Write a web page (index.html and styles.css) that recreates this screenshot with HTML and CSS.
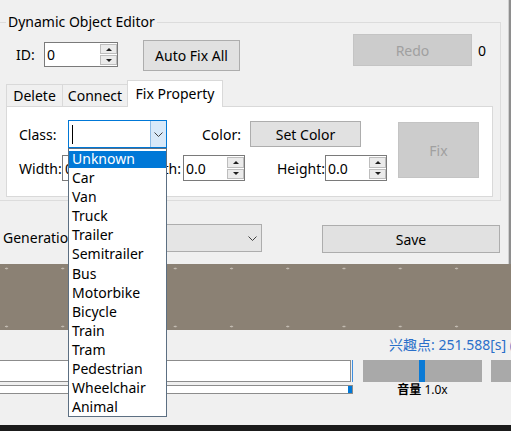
FILE: index.html
```html
<!DOCTYPE html>
<html lang="en">
<head>
<meta charset="utf-8">
<title>Dynamic Object Editor</title>
<link rel="stylesheet" href="styles.css">
</head>
<body>
<div class="top">
  <div class="dialog">
    <fieldset class="group">
      <legend class="group-title">Dynamic Object Editor</legend>
      <div class="row-id">
        <div class="id-field">
          <span class="lbl lbl-id">ID:</span>
          <div class="spin spin-id">
            <span class="spin-val">0</span>
            <span class="spin-btns"><span class="spin-b spin-up"></span><span class="spin-b spin-down"></span></span>
          </div>
        </div>
        <button class="btn btn-autofix">Auto Fix All</button>
        <button class="btn btn-redo" disabled>Redo</button>
        <span class="redo-count">0</span>
      </div>
      <div class="tabs">
        <div class="tab tab-delete">Delete</div>
        <div class="tab tab-connect">Connect</div>
        <div class="tab tab-active">Fix Property</div>
      </div>
      <div class="panel">
        <div class="fields">
          <div class="field-row row-a">
            <span class="lbl lbl-class">Class:</span>
            <div class="combo combo-class">
              <span class="combo-text"><span class="caret"></span></span>
              <span class="combo-btn"><svg class="chev" width="9" height="5" viewBox="0 0 9 5"><polyline points="0.5,0.5 4.5,4.5 8.5,0.5" fill="none" stroke="#404040" stroke-width="1"/></svg></span>
              <ul class="dropdown">
                <li class="sel">Unknown</li>
                <li>Car</li>
                <li>Van</li>
                <li>Truck</li>
                <li>Trailer</li>
                <li>Semitrailer</li>
                <li>Bus</li>
                <li>Motorbike</li>
                <li>Bicycle</li>
                <li>Train</li>
                <li>Tram</li>
                <li>Pedestrian</li>
                <li>Wheelchair</li>
                <li>Animal</li>
              </ul>
            </div>
            <span class="lbl lbl-color">Color:</span>
            <button class="btn btn-setcolor">Set Color</button>
          </div>
          <div class="field-row row-b">
            <span class="lbl lbl-width">Width:</span>
            <div class="spin spin-size">
              <span class="spin-val">0.0</span>
              <span class="spin-btns"><span class="spin-b spin-up"></span><span class="spin-b spin-down"></span></span>
            </div>
            <span class="lbl lbl-length">Length:</span>
            <div class="spin spin-size">
              <span class="spin-val">0.0</span>
              <span class="spin-btns"><span class="spin-b spin-up"></span><span class="spin-b spin-down"></span></span>
            </div>
            <span class="lbl lbl-height">Height:</span>
            <div class="spin spin-size">
              <span class="spin-val">0.0</span>
              <span class="spin-btns"><span class="spin-b spin-up"></span><span class="spin-b spin-down"></span></span>
            </div>
          </div>
        </div>
        <button class="btn btn-fix" disabled>Fix</button>
      </div>
    </fieldset>
    <div class="gen-row">
      <span class="lbl lbl-gen">Generation</span>
      <div class="combo combo-gen">
        <span class="combo-text"></span>
        <span class="combo-btn"><svg class="chev" width="9" height="5" viewBox="0 0 9 5"><polyline points="0.5,0.5 4.5,4.5 8.5,0.5" fill="none" stroke="#404040" stroke-width="1"/></svg></span>
      </div>
      <button class="btn btn-save">Save</button>
    </div>
  </div>
  <div class="edge"></div>
</div>
<div class="timeline"></div>
<div class="player">
  <div class="info">兴趣点: 251.588[s] (</div>
  <div class="controls">
    <div class="seek">
      <div class="textbox-row"><div class="textbox-field"></div><div class="textbox-mark"></div></div>
      <div class="progress"><span class="progress-thumb"></span></div>
    </div>
    <div class="volume">
      <div class="vol-track"><span class="vol-thumb" style="margin-left:56px"></span></div>
      <div class="vol-label"><b>音量</b> 1.0x</div>
    </div>
    <div class="speed"></div>
  </div>
</div>
<div class="taskbar"></div>
</body>
</html>
```
FILE: styles.css
```css
* { box-sizing: border-box; }
html, body { margin: 0; padding: 0; }
body {
  width: 511px;
  height: 431px;
  overflow: hidden;
  font-family: "Noto Sans", "Noto Sans CJK SC", sans-serif;
  font-size: 14px;
  color: #000;
  background: #f0f0f0;
}

.top { display: flex; height: 264px; }
.dialog { width: 508px; flex: none; background: #f0f0f0; }
.edge { flex: 1; background: #8e8e8e; border-left: 1px solid #cfcfcf; }

.group {
  margin: 12px 0 0;
  padding: 0 0 3px;
  border: 1px solid #dcdcdc;
  border-left: 0;
  width: 501px;
  min-width: 0;
}
.group-title {
  margin-left: 6px;
  padding: 0 2px;
  line-height: 20px;
  font-size: 14px;
}

.btn {
  font-family: inherit;
  font-size: 14px;
  color: #000;
  background: #e1e1e1;
  border: 1px solid #adadad;
  padding: 0;
  margin: 0;
  display: flex;
  align-items: center;
  justify-content: center;
  flex: none;
}
.btn:disabled { background: #cccccc; border-color: #c4c4c4; color: #a0a0a0; }

.lbl { flex: none; white-space: nowrap; }

.row-id { display: flex; align-items: flex-start; height: 48px; }
.id-field { display: flex; align-items: center; margin-top: 10px; padding-left: 16px; }
.lbl-id { width: 28px; }
.spin-id { width: 74px; height: 25px; }
.btn-autofix { margin: 8px 0 0 25px; width: 97px; height: 31px; }
.btn-redo { margin: 2px 0 0 113px; width: 119px; height: 32px; }
.redo-count { margin: 9px 0 0 6px; line-height: 20px; }

.spin { display: flex; flex: none; border: 1px solid #7a7a7a; background: #fff; }
.spin-val { flex: 1; padding-left: 2px; display: flex; align-items: center; }
.spin-btns { display: flex; flex-direction: column; width: 17px; margin: 1px 0; gap: 1px; }
.spin-b {
  flex: 1;
  background: #ebebeb;
  border: 1px solid #bdbdbd;
  display: flex;
  align-items: center;
  justify-content: center;
}
.spin-up::before {
  content: "";
  border-left: 3px solid transparent;
  border-right: 3px solid transparent;
  border-bottom: 3px solid #1e1e1e;
}
.spin-down::before {
  content: "";
  border-left: 3px solid transparent;
  border-right: 3px solid transparent;
  border-top: 3px solid #1e1e1e;
}

.tabs { display: flex; align-items: flex-end; height: 26px; padding-left: 6px; }
.tab {
  height: 22px;
  border: 1px solid #d9d9d9;
  border-bottom: 0;
  background: #f0f0f0;
  display: flex;
  align-items: center;
  justify-content: center;
  white-space: nowrap;
}
.tab-delete { width: 57px; }
.tab-connect { width: 66px; margin-left: -1px; }
.tab-active {
  width: 96px;
  height: 27px;
  margin-left: -1px;
  margin-bottom: -1px;
  background: #fff;
  position: relative;
  z-index: 1;
  padding-bottom: 1px;
}

.panel {
  margin-left: 6px;
  width: 487px;
  height: 91px;
  border: 1px solid #d9d9d9;
  background: #fff;
  display: flex;
  align-items: flex-start;
  padding: 13px 0 0 12px;
}
.fields { display: flex; flex-direction: column; gap: 7px; }
.field-row { display: flex; align-items: center; }
.row-a { height: 28px; }
.row-b { height: 26px; }
.lbl-class { width: 49px; }
.lbl-color { width: 48px; margin-left: 35px; }
.btn-setcolor { width: 111px; height: 26px; }
.lbl-width { width: 43px; }
.spin-size { width: 62px; height: 26px; }
.lbl-length { width: 52px; margin-left: 7px; }
.lbl-height { width: 48px; margin-left: 32px; }
.btn-fix { margin: 2px 0 0 11px; width: 81px; height: 56px; }

.combo { display: flex; flex: none; border: 1px solid #adadad; background: #e5e5e5; }
.combo-class { position: relative; width: 99px; height: 28px; border-color: #0078d7; background: #fff; }
.combo-text { flex: 1; display: flex; align-items: center; padding-left: 3px; }
.caret { width: 1px; height: 19px; background: #000; }
.combo-btn { width: 17px; display: flex; align-items: center; justify-content: center; }
.combo-class .combo-btn { width: 16px; background: #d8e9f9; border-left: 1px solid #8dbbe6; }
.chev { display: block; }

.dropdown {
  position: absolute;
  z-index: 10;
  top: calc(100% + 1px);
  left: -1px;
  width: 99px;
  margin: 0;
  padding: 0;
  list-style: none;
  border: 1px solid #5c6f82;
  background: #fff;
}
.dropdown li {
  height: 19.1px;
  line-height: 15px;
  padding-left: 3px;
  border-top: 2px solid transparent;
  background-clip: padding-box;
  white-space: nowrap;
}
.dropdown .sel { background-color: #0078d7; color: #fff; }

.gen-row { display: flex; align-items: flex-start; margin-top: 23px; }
.lbl-gen { width: 83px; padding-left: 3px; line-height: 28px; overflow: hidden; }
.combo-gen { width: 179px; height: 28px; }
.btn-save { margin: 1px 0 0 60px; width: 178px; height: 28px; }

.timeline {
  height: 66px;
  background-color: #8b8174;
  background-image: radial-gradient(2px 1.2px at 6.5px 4.5px, #c2bbb1 55%, rgba(194,187,177,0) 100%);
  background-size: 56.25px 58px;
}

.player { height: 95px; background: #f0f0f0; }
.info {
  height: 30px;
  line-height: 30px;
  padding-left: 389px;
  color: #2a6fc9;
  white-space: nowrap;
  overflow: hidden;
}
.controls { display: flex; align-items: flex-start; }
.seek { width: 353px; flex: none; }
.textbox-row { display: flex; height: 22px; }
.textbox-field { width: 351px; border: 1px solid #8c8c8c; border-left: 0; background: #fff; }
.textbox-mark { width: 1px; margin-left: 1px; background: #3d8ee0; }
.progress {
  margin-top: 3px;
  height: 9px;
  border: 1px solid #8c8c8c;
  border-left: 0;
  background: #fff;
  display: flex;
  justify-content: flex-end;
}
.progress-thumb { width: 4px; background: #0078d7; }
.volume { margin-left: 10px; width: 119px; flex: none; }
.vol-track { height: 22px; background: #a9a9a9; display: flex; }
.vol-thumb { width: 6px; background: #0a7ad6; }
.vol-label { font-size: 12px; line-height: 16px; text-align: center; white-space: nowrap; }
.speed { margin-left: 9px; width: 30px; height: 22px; flex: none; background: #a9a9a9; }

.taskbar { height: 6px; background: #1b1b1b; }
```
